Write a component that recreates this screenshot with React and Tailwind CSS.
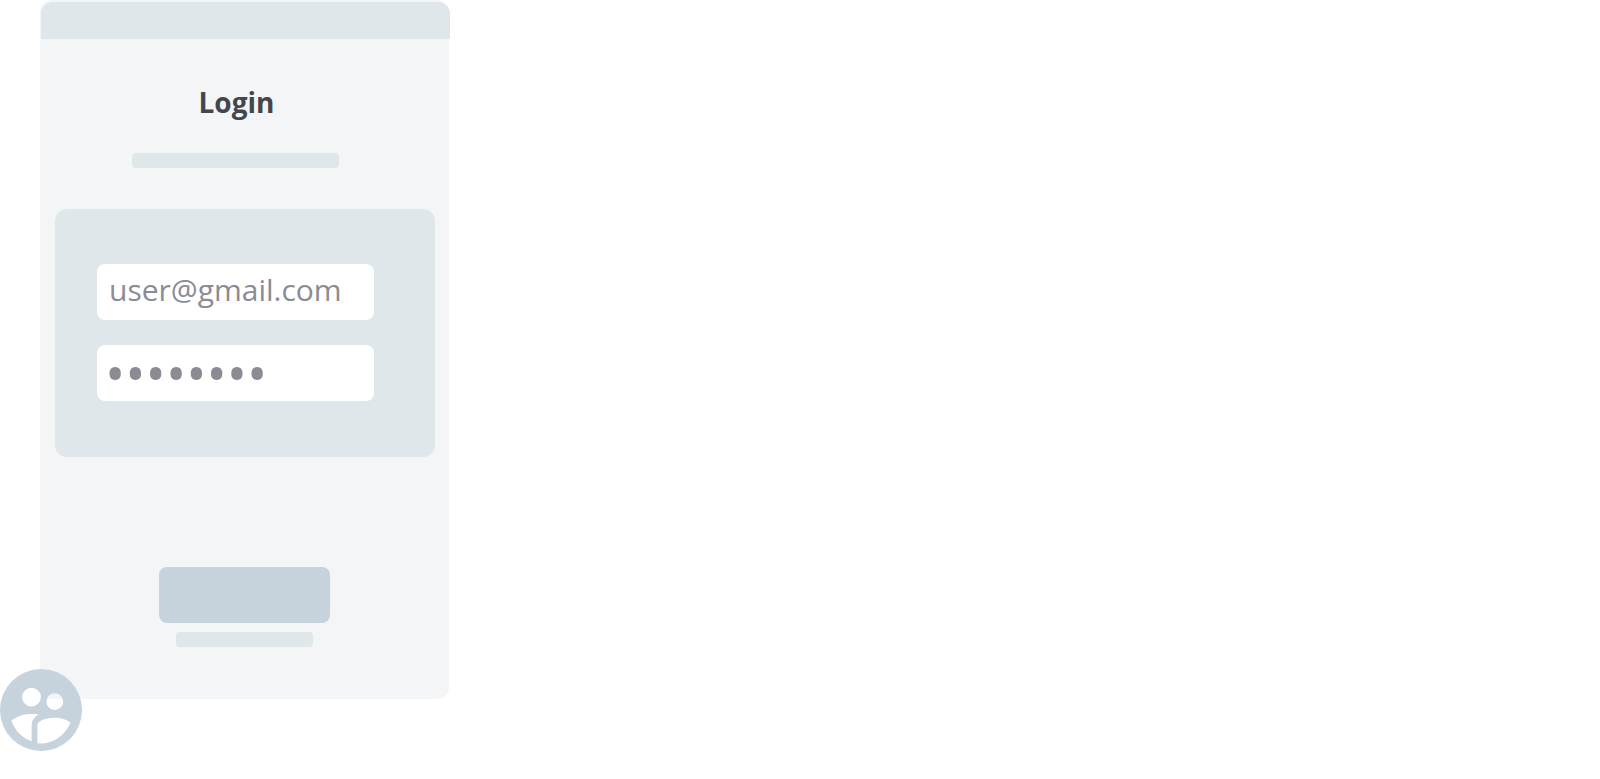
import React, { useState } from "react";

const UsersBadge = () => (
  <svg
    className="absolute -left-10 -bottom-13 size-[82px]"
    viewBox="0 0 82 82"
    fill="#c6d2dc"
    fillRule="evenodd"
    aria-hidden="true"
  >
    <path d="M41 0a41 41 0 1 1 0 82a41 41 0 0 1 0-82zM31.5 18.7a9.4 9.4 0 1 0 0 18.8a9.4 9.4 0 0 0 0-18.8zM54.8 24.2a8.4 8.4 0 1 0 0 16.8a8.4 8.4 0 0 0 0-16.8zM11.5 51.8C17 46.8 25 45 31.5 45C34 45 36.5 45.2 38.3 45.6C34 48.3 31.6 52 31.6 56L31.6 72.4C22 69 14.5 61 11.5 51.8zM37.4 56C37.4 51.8 46 48.7 54.8 48.7C60.5 48.7 66.5 50.3 70.5 53.4C65.5 66 53.5 74.5 41 74.5C39.8 74.5 38.6 74.4 37.4 74.3z" />
  </svg>
);

const LoginForm = () => {
  const [email, setEmail] = useState("user@gmail.com");
  const [password, setPassword] = useState("password");

  const handleSubmit = (e) => {
    e.preventDefault();
  };

  return (
    <form onSubmit={handleSubmit}>
      <div className="flex flex-col gap-[25px] rounded-xl bg-[#dfe7ea] pt-[55px] pr-[61px] pb-14 pl-[42px]">
        <input
          type="email"
          aria-label="Email"
          className="h-14 w-full rounded-lg bg-white px-3 pb-1.5 text-[30px] text-[#8a8b93] outline-none"
          value={email}
          onChange={(e) => setEmail(e.target.value)}
        />
        <input
          type="password"
          aria-label="Password"
          className="h-14 w-full rounded-lg bg-white px-2 text-[54px] leading-14 text-[#8a8b93] outline-none"
          value={password}
          onChange={(e) => setPassword(e.target.value)}
        />
      </div>
      <div className="mt-[110px] flex flex-col items-center gap-[9px] pr-px">
        <button
          type="submit"
          aria-label="Log in"
          className="h-14 w-[171px] rounded-lg bg-[#c6d2dc]"
        />
        <div className="h-[15px] w-[137px] rounded bg-[#dfe7ea]" />
      </div>
    </form>
  );
};

const App = () => {
  return (
    <main className="pb-20 pl-10 font-['Open_Sans',sans-serif]">
      <div className="relative w-full max-w-[409px] rounded-xl bg-[#f3f5f7] pt-0.5 pb-13">
        <div className="ml-px -mr-px h-[37px] rounded-t-xl bg-[#dfe7ea]" />
        <header className="flex flex-col items-center pt-[43px] pr-4">
          <h1 className="text-[28px] leading-10 font-bold text-[#45464c]">Login</h1>
          <div className="mt-[31px] mr-0.5 h-[15px] w-[207px] rounded bg-[#dfe7ea]" />
        </header>
        <div className="mt-[41px] pr-3.5 pl-[15px]">
          <LoginForm />
        </div>
        <UsersBadge />
      </div>
    </main>
  );
};

export default App;
